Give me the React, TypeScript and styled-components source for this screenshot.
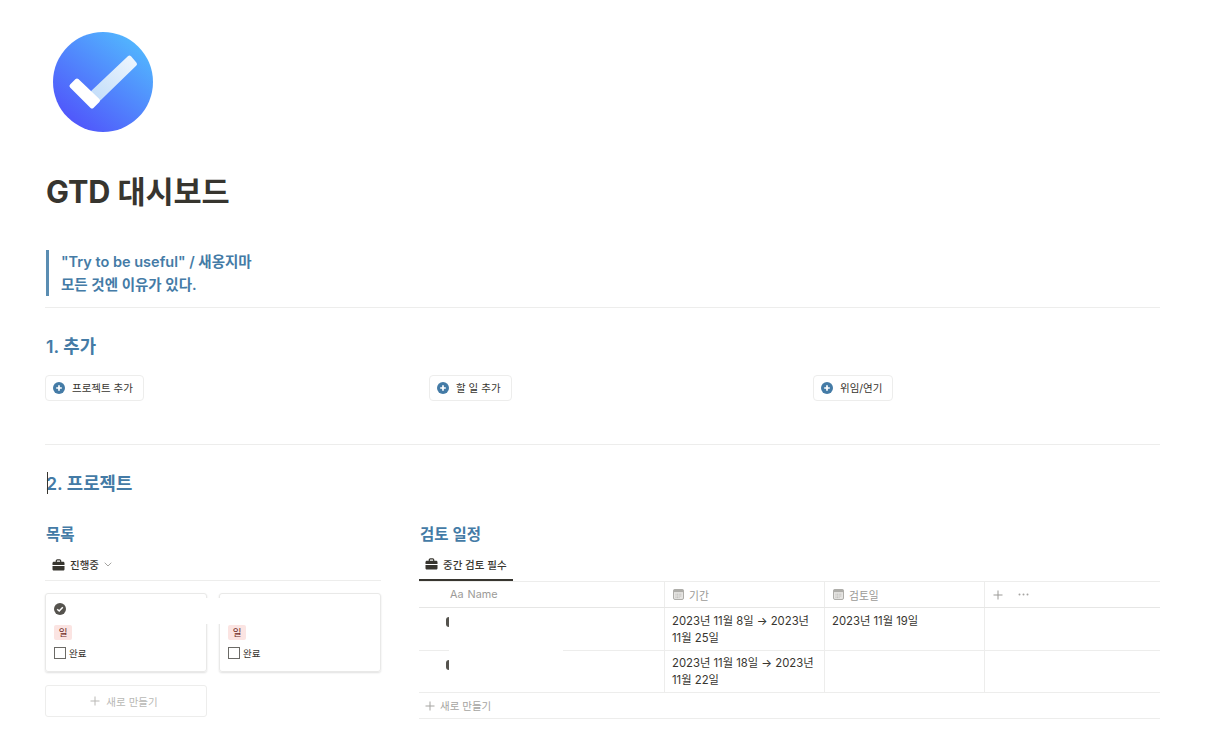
import * as React from 'react';
import styled, { createGlobalStyle } from 'styled-components';

const GlobalStyle = createGlobalStyle`
    html, body {
        margin: 0;
        padding: 0;
        background: #fff;
    }
    body {
        font-family: Inter, "Noto Sans CJK KR", sans-serif;
        color: #37352f;
        overflow: hidden;
    }
    * {
        box-sizing: border-box;
    }
    svg {
        display: block;
        flex-shrink: 0;
    }
`;

const BLUE = '#447ba6';
const LINE = '#ededec';

const Page = styled.div`
    width: 1207px;
    height: 737px;
    padding: 32px 47px 0 45px;
    overflow: hidden;
`;

const LogoWrap = styled.div`
    height: 100px;
    padding-left: 8px;
`;

const Title = styled.h1`
    margin: 41px 0 0 1px;
    height: 36px;
    font-size: 30.6px;
    line-height: 38px;
    font-weight: 700;
    letter-spacing: -0.1px;
    color: #37352f;
`;

const Quote = styled.blockquote`
    margin: 41px 0 0 1px;
    height: 46px;
    padding-left: 12px;
    border-left: 3px solid #5a8db2;
    font-size: 14.5px;
    line-height: 23px;
    font-weight: 600;
    color: ${BLUE};
`;

const Divider = styled.hr<{ $top: number }>`
    margin: ${(p) => p.$top}px 0 0;
    border: 0;
    border-top: 1px solid ${LINE};
`;

const Heading = styled.h2<{ $top: number }>`
    margin: ${(p) => p.$top}px 0 0 1px;
    height: 26px;
    font-size: 17.8px;
    line-height: 30px;
    font-weight: 600;
    color: ${BLUE};
    position: relative;
`;

const Caret = styled.span`
    position: absolute;
    left: 1px;
    top: 3px;
    width: 1px;
    height: 22px;
    background: #37352f;
`;

const ActionGrid = styled.div`
    display: grid;
    grid-template-columns: repeat(3, 384px);
    margin-top: 17px;
`;

const ActionButton = styled.div`
    justify-self: start;
    display: flex;
    align-items: center;
    gap: 7px;
    height: 26px;
    padding: 0 10px 1px 7px;
    border: 1px solid ${LINE};
    border-radius: 4px;
    font-size: 10.5px;
    color: #37352f;
`;

const Columns = styled.div`
    display: grid;
    grid-template-columns: 336px 741px;
    column-gap: 38px;
    margin-top: 28px;
`;

const SubHeading = styled.h3`
    margin: 0 0 0 1px;
    height: 24px;
    font-size: 15.5px;
    line-height: 24px;
    font-weight: 600;
    color: ${BLUE};
`;

const ViewBar = styled.div<{ $height: number }>`
    display: flex;
    height: ${(p) => p.$height}px;
    margin-top: 1px;
    border-bottom: 1px solid ${LINE};
`;

const ViewTab = styled.div<{ $active?: boolean; $inset?: number }>`
    display: flex;
    align-items: center;
    gap: 5px;
    height: 33px;
    margin-left: ${(p) => p.$inset ?? 0}px;
    padding: ${(p) => (p.$active ? 1 : 0)}px 6px 0;
    font-size: 10.5px;
    font-weight: 500;
    color: #37352f;
    border-bottom: ${(p) => (p.$active ? '2px solid #37352f' : '0')};
`;

const CardGrid = styled.div`
    position: relative;
    display: grid;
    grid-template-columns: 162px 162px;
    column-gap: 12px;
    row-gap: 13px;
    margin-top: 12px;
`;

const Card = styled.div`
    height: 79px;
    padding: 9px 8px 0;
    border: 1px solid #e9e9e8;
    border-radius: 3px;
    box-shadow: 0 1px 2px rgba(15, 15, 15, 0.13);
`;

const CardTop = styled.div`
    height: 22px;
`;

const Tag = styled.span`
    display: block;
    width: 18px;
    height: 15px;
    border-radius: 2px;
    background: #fbe4e2;
    color: #6e2a25;
    font-size: 9.5px;
    line-height: 15px;
    text-align: center;
`;

const CheckRow = styled.div`
    display: flex;
    align-items: center;
    gap: 3px;
    height: 14px;
    margin-top: 6px;
    font-size: 9.5px;
    color: #37352f;
`;

const CheckBox = styled.span`
    width: 12px;
    height: 12px;
    border: 1.5px solid #6b6a66;
`;

const CardGapMask = styled.div`
    position: absolute;
    left: 161px;
    top: 5px;
    width: 15px;
    height: 26px;
    background: #fff;
`;

const NewCard = styled.div`
    display: flex;
    align-items: center;
    justify-content: center;
    gap: 6px;
    height: 32px;
    width: 162px;
    padding-right: 4px;
    border: 1px solid ${LINE};
    border-radius: 3px;
    font-size: 10.5px;
    color: #b9b8b5;
`;

const Table = styled.div`
    position: relative;
`;

const TableRow = styled.div<{ $height: number; $heavy?: boolean }>`
    display: grid;
    grid-template-columns: 245px 160px 160px 176px;
    height: ${(p) => p.$height}px;
    border-bottom: 1px solid ${(p) => (p.$heavy ? '#e6e6e5' : LINE)};
`;

const HeadCell = styled.div<{ $first?: boolean; $pad?: number }>`
    display: flex;
    align-items: center;
    gap: ${(p) => (p.$first ? 4 : 5)}px;
    padding-left: ${(p) => p.$pad ?? 8}px;
    border-left: ${(p) => (p.$first ? '0' : `1px solid ${LINE}`)};
    font-size: 10.8px;
    color: #9b9a97;
`;

const Cell = styled.div<{ $first?: boolean; $top: number }>`
    position: relative;
    padding: ${(p) => p.$top}px 7px 0 7px;
    border-left: ${(p) => (p.$first ? '0' : `1px solid ${LINE}`)};
    font-size: 11.3px;
    line-height: 17px;
    color: #37352f;
`;

const RowIconSliver = styled.span`
    position: absolute;
    left: 27px;
    top: 9px;
    width: 3px;
    height: 10px;
    border-radius: 3px 0 0 3px;
    background: #55534e;
`;

const RowMask = styled.div`
    position: absolute;
    left: 30px;
    top: 67px;
    width: 114px;
    height: 3px;
    background: #fff;
`;

const NewRow = styled.div`
    display: flex;
    align-items: center;
    gap: 5px;
    height: 26px;
    padding-left: 6px;
    border-bottom: 1px solid ${LINE};
    font-size: 10.5px;
    color: #a5a4a1;
`;

const ExtraCell = styled(HeadCell)`
    gap: 15px;
`;

const Logo = () => (
    <svg width="100" height="100" viewBox="0 0 100 100">
        <defs>
            <linearGradient id="logoBg" x1="0.85" y1="0.1" x2="0.2" y2="0.9">
                <stop offset="0" stopColor="#52b6fe" />
                <stop offset="1" stopColor="#5058fb" />
            </linearGradient>
            <linearGradient id="logoBar" x1="0" y1="1" x2="1" y2="0">
                <stop offset="0" stopColor="#c2ddf9" />
                <stop offset="1" stopColor="#eef6fe" />
            </linearGradient>
        </defs>
        <circle cx="50" cy="50" r="50" fill="url(#logoBg)" />
        <polygon points="40,60 76.5,25.5 82,32 46.5,66.5" fill="url(#logoBar)" stroke="url(#logoBar)" strokeWidth="4" strokeLinejoin="round" />
        <polygon points="24,48.5 45,68.5 39,74.5 18.5,54" fill="#fff" stroke="#fff" strokeWidth="4" strokeLinejoin="round" />
    </svg>
);

const PlusCircle = () => (
    <svg width="12" height="12" viewBox="0 0 12 12">
        <circle cx="6" cy="6" r="6" fill={BLUE} />
        <path d="M6 3.2v5.6M3.2 6h5.6" stroke="#fff" strokeWidth="1.7" />
    </svg>
);

const Briefcase = () => (
    <svg width="13" height="12" viewBox="0 0 13 12">
        <path d="M4.3 3V1.8c0-.6.4-1 1-1h2.4c.6 0 1 .4 1 1V3" fill="none" stroke="#37352f" strokeWidth="1.2" />
        <path d="M.5 4.2c0-.8.6-1.4 1.4-1.4h9.2c.8 0 1.4.6 1.4 1.4v1.9H.5z" fill="#37352f" />
        <path d="M.5 6.9h12v3.3c0 .8-.6 1.3-1.4 1.3H1.9c-.8 0-1.4-.5-1.4-1.3z" fill="#37352f" />
    </svg>
);

const Chevron = () => (
    <svg width="8" height="5" viewBox="0 0 8 5">
        <path d="M.7.7 4 4l3.3-3.3" fill="none" stroke="#a5a4a1" strokeWidth="1" />
    </svg>
);

const CheckCircle = () => (
    <svg width="12" height="12" viewBox="0 0 12 12">
        <circle cx="6" cy="6" r="6" fill="#55534e" />
        <path d="M3.2 6.2 5.2 8l3.6-3.8" fill="none" stroke="#fff" strokeWidth="1.5" />
    </svg>
);

const Plus = ({ size = 10 }: { size?: number }) => (
    <svg width={size} height={size} viewBox="0 0 10 10">
        <path d="M5 .5v9M.5 5h9" stroke="currentColor" strokeWidth="1" fill="none" />
    </svg>
);

const Calendar = () => (
    <svg width="11" height="11" viewBox="0 0 11 11">
        <rect x="0.5" y="0.5" width="10" height="10" rx="1.5" fill="#e6e5e3" stroke="#aeada9" />
        <rect x="0.5" y="0.5" width="10" height="2.6" fill="#aeada9" />
        <path d="M2.5 5.2h6M2.5 7h6M2.5 8.7h4" stroke="#aeada9" strokeWidth="0.8" strokeDasharray="1 0.6" />
    </svg>
);

const Dots = () => (
    <svg width="11" height="3" viewBox="0 0 11 3">
        <circle cx="1.5" cy="1.5" r="1" fill="#a5a4a1" />
        <circle cx="5.5" cy="1.5" r="1" fill="#a5a4a1" />
        <circle cx="9.5" cy="1.5" r="1" fill="#a5a4a1" />
    </svg>
);

const actions = ['프로젝트 추가', '할 일 추가', '위임/연기'];

const reviews = [
    { period: '2023년 11월 8일 → 2023년 11월 25일', review: '2023년 11월 19일', height: 43, top: 5 },
    { period: '2023년 11월 18일 → 2023년 11월 22일', review: '', height: 42, top: 4 },
];

const App = () => (
    <Page>
        <GlobalStyle />
        <LogoWrap>
            <Logo />
        </LogoWrap>
        <Title>GTD 대시보드</Title>
        <Quote>
            "Try to be useful" / 새옹지마
            <br />
            모든 것엔 이유가 있다.
        </Quote>
        <Divider $top={11} />
        <Heading $top={24}>1. 추가</Heading>
        <ActionGrid>
            {actions.map((label) => (
                <ActionButton key={label}>
                    <PlusCircle />
                    {label}
                </ActionButton>
            ))}
        </ActionGrid>
        <Divider $top={43} />
        <Heading $top={24}>
            <Caret />
            2. 프로젝트
        </Heading>
        <Columns>
            <div>
                <SubHeading>목록</SubHeading>
                <ViewBar $height={33}>
                    <ViewTab $inset={1}>
                        <Briefcase />
                        진행중
                        <Chevron />
                    </ViewTab>
                </ViewBar>
                <CardGrid>
                    <Card>
                        <CardTop>
                            <CheckCircle />
                        </CardTop>
                        <Tag>일</Tag>
                        <CheckRow>
                            <CheckBox />
                            완료
                        </CheckRow>
                    </Card>
                    <Card>
                        <CardTop />
                        <Tag>일</Tag>
                        <CheckRow>
                            <CheckBox />
                            완료
                        </CheckRow>
                    </Card>
                    <NewCard>
                        <Plus />
                        새로 만들기
                    </NewCard>
                    <CardGapMask />
                </CardGrid>
            </div>
            <div>
                <SubHeading>검토 일정</SubHeading>
                <ViewBar $height={34}>
                    <ViewTab $active>
                        <Briefcase />
                        중간 검토 필수
                    </ViewTab>
                </ViewBar>
                <Table>
                    <TableRow $height={26} $heavy>
                        <HeadCell $first $pad={31}>
                            <span>Aa</span>
                            <span>Name</span>
                        </HeadCell>
                        <HeadCell>
                            <Calendar />
                            기간
                        </HeadCell>
                        <HeadCell>
                            <Calendar />
                            검토일
                        </HeadCell>
                        <ExtraCell>
                            <Plus />
                            <Dots />
                        </ExtraCell>
                    </TableRow>
                    {reviews.map((row) => (
                        <TableRow key={row.period} $height={row.height}>
                            <Cell $first $top={row.top}>
                                <RowIconSliver />
                            </Cell>
                            <Cell $top={row.top}>{row.period}</Cell>
                            <Cell $top={row.top}>{row.review}</Cell>
                            <Cell $top={row.top} />
                        </TableRow>
                    ))}
                    <NewRow>
                        <Plus />
                        새로 만들기
                    </NewRow>
                    <RowMask />
                </Table>
            </div>
        </Columns>
    </Page>
);

export default App;
